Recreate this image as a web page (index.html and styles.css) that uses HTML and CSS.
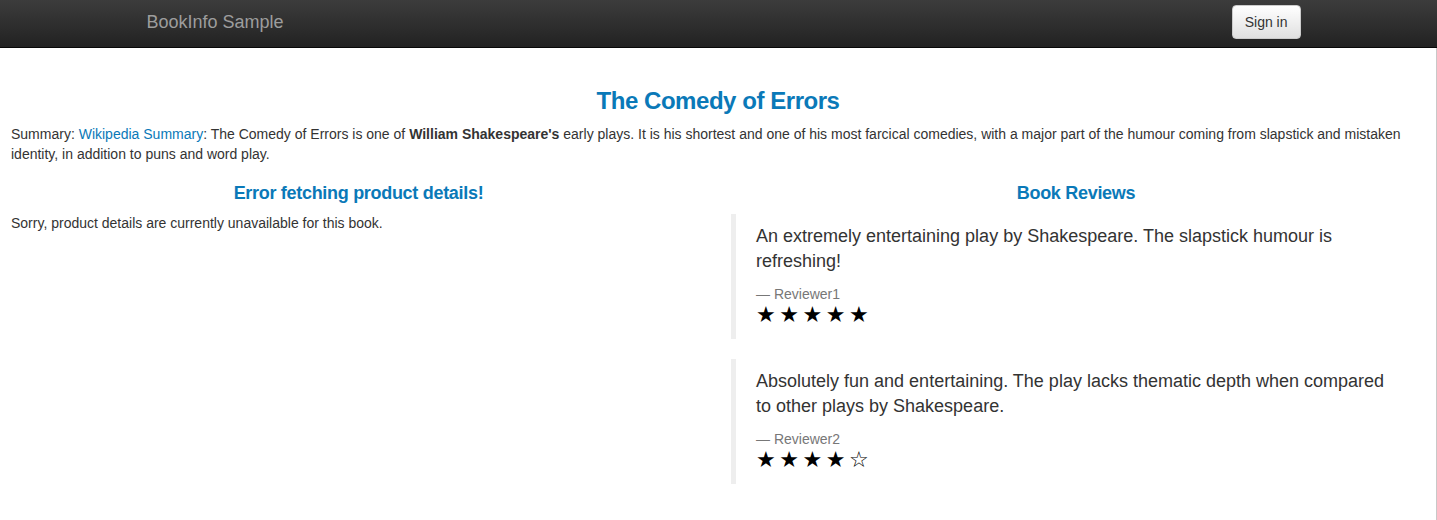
FILE: index.html
```html
<!DOCTYPE html>
<html>
<head>
<meta charset="utf-8">
<title>Simple Bookstore App</title>
<link rel="stylesheet" href="styles.css">
</head>
<body>
<nav class="navbar">
  <div class="navbar-inner">
    <a class="brand" href="#">BookInfo Sample</a>
    <button class="btn-signin" type="button">Sign in</button>
  </div>
</nav>
<main class="page">
  <h3 class="title">The Comedy of Errors</h3>
  <p class="summary">Summary: <a href="#">Wikipedia Summary</a>: The Comedy of Errors is one of <b>William Shakespeare's</b> early plays. It is his shortest and one of his most farcical comedies, with a major part of the humour coming from slapstick and mistaken identity, in addition to puns and word play.</p>
  <div class="row">
    <section class="col col-left">
      <h4 class="col-title">Error fetching product details!</h4>
      <p class="body-text">Sorry, product details are currently unavailable for this book.</p>
    </section>
    <section class="col col-right">
      <h4 class="col-title">Book Reviews</h4>
      <blockquote class="review">
        <p>An extremely entertaining play by Shakespeare. The slapstick humour is refreshing!</p>
        <small>Reviewer1</small>
        <span class="stars">★★★★★</span>
      </blockquote>
      <blockquote class="review">
        <p>Absolutely fun and entertaining. The play lacks thematic depth when compared to other plays by Shakespeare.</p>
        <small>Reviewer2</small>
        <span class="stars">★★★★☆</span>
      </blockquote>
    </section>
  </div>
</main>
</body>
</html>
```
FILE: styles.css
```css
* { box-sizing: border-box; }
html, body { margin: 0; padding: 0; }
body {
  font-family: "Liberation Sans", Arial, sans-serif;
  font-size: 14px;
  line-height: 1.42857;
  color: #333;
  background: #fff;
}
a { color: #0a79b8; text-decoration: none; }

.navbar {
  height: 48px;
  background: linear-gradient(to bottom, #3c3c3c 0%, #222 100%);
  border-bottom: 1px solid #080808;
}
.navbar-inner {
  width: 1170px;
  margin: 0 auto;
  display: flex;
  align-items: flex-start;
  justify-content: space-between;
  padding: 0 3px 0 13px;
}
.brand {
  color: #9d9d9d;
  font-size: 18px;
  line-height: 20px;
  padding: 12px 0 15px;
}
.btn-signin {
  margin-top: 5px;
  height: 34px;
  padding: 6px 12px;
  font-family: "Liberation Sans", Arial, sans-serif;
  font-size: 14px;
  line-height: 20px;
  color: #333;
  background: linear-gradient(to bottom, #fff 0%, #e0e0e0 100%);
  border: 1px solid #ccc;
  border-radius: 4px;
}

.page {
  padding: 20px 11px 0;
  border-right: 1px solid #c8c8c8;
  min-height: 472px;
}
.title {
  margin: 20px 0 10px;
  font-size: 24px;
  line-height: 1.1;
  font-weight: bold;
  letter-spacing: -0.45px;
  text-align: center;
  color: #0a79b8;
}
.summary {
  margin: 0 0 10px;
  font-size: 14px;
  line-height: 20px;
}
.row {
  display: grid;
  grid-template-columns: 1fr 1fr;
  margin: 0 -11px;
}
.col-left { padding: 0 12px 0 11px; }
.col-right { padding: 0 15px 0 13px; }
.col-title {
  margin: 10px 0 10px;
  font-size: 18px;
  line-height: 1.1;
  font-weight: bold;
  letter-spacing: -0.3px;
  text-align: center;
  color: #0a79b8;
}
.body-text {
  margin: 0;
  font-size: 14px;
}
.review {
  margin: 0 0 20px;
  padding: 10px 20px;
  border-left: 5px solid #eee;
  font-size: 18px;
  line-height: 25px;
}
.review p { margin: 0 0 10px; }
.review small {
  display: block;
  font-size: 14px;
  line-height: 20px;
  color: #777;
}
.review small::before { content: "\2014 \00A0"; }
.stars {
  color: #000;
  font-family: "DejaVu Sans", sans-serif;
  font-size: 22px;
  line-height: 22px;
  letter-spacing: 3.5px;
}
```
